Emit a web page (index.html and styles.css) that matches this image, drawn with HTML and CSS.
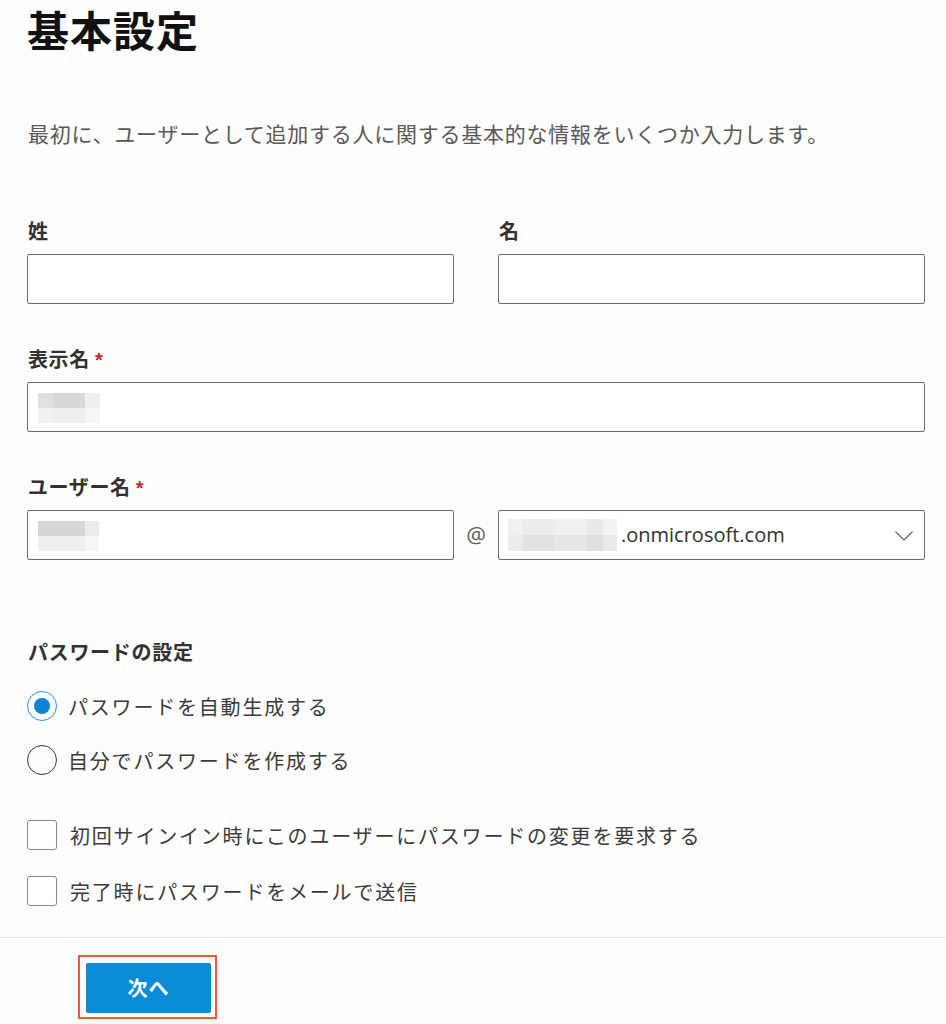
FILE: index.html
```html
<!DOCTYPE html>
<html lang="ja">
<head>
<meta charset="utf-8">
<title>基本設定</title>
<link rel="stylesheet" href="styles.css">
</head>
<body>
<div class="page">
  <h1 class="title">基本設定</h1>
  <p class="desc">最初に、ユーザーとして追加する人に関する基本的な情報をいくつか入力します。</p>

  <div class="row two first">
    <div class="field">
      <div class="label">姓</div>
      <div class="input"></div>
    </div>
    <div class="field">
      <div class="label">名</div>
      <div class="input"></div>
    </div>
  </div>

  <div class="row">
    <div class="field">
      <div class="label">表示名 <span class="req">*</span></div>
      <div class="input">
        <div class="blur blur-a">
          <i class="c1"></i><i class="c2"></i><i class="c3"></i>
          <i class="c4"></i><i class="c5"></i><i class="c6"></i>
        </div>
      </div>
    </div>
  </div>

  <div class="row">
    <div class="label">ユーザー名 <span class="req">*</span></div>
    <div class="user-row">
      <div class="input">
        <div class="blur blur-b">
          <i class="d1"></i><i class="d2"></i>
          <i class="d3"></i><i class="d4"></i>
        </div>
      </div>
      <div class="at">@</div>
      <div class="input select">
        <div class="domain">
          <div class="blur blur-c">
            <i class="e1"></i><i class="e2"></i><i class="e3"></i><i class="e4"></i><i class="e5"></i>
            <i class="e6"></i><i class="e7"></i><i class="e8"></i><i class="e9"></i><i class="e10"></i>
          </div>
          <span class="domain-text">.onmicrosoft.com</span>
        </div>
        <svg class="chev" width="18" height="10" viewBox="0 0 18 10"><path d="M0.5 0.8 L9 9 L17.5 0.8" fill="none" stroke="#605e5c" stroke-width="1.2"/></svg>
      </div>
    </div>
  </div>

  <div class="pw-title">パスワードの設定</div>
  <div class="radios">
    <div class="opt"><span class="radio on"><span class="dot"></span></span><span>パスワードを自動生成する</span></div>
    <div class="opt"><span class="radio"></span><span>自分でパスワードを作成する</span></div>
  </div>

  <div class="checks">
    <div class="opt chk"><span class="box"></span><span>初回サインイン時にこのユーザーにパスワードの変更を要求する</span></div>
    <div class="opt chk"><span class="box"></span><span>完了時にパスワードをメールで送信</span></div>
  </div>
</div>
<div class="footer">
  <span class="focus-ring"><button class="btn">次へ</button></span>
</div>
</body>
</html>
```

FILE: styles.css
```css
html, body {
  margin: 0;
  padding: 0;
  background: #fcfdfc;
}
body {
  font-family: "Noto Sans CJK JP", "Noto Sans", sans-serif;
  color: #323130;
}
.page {
  padding: 0 21px 0 27px;
}
.title {
  margin: 0;
  height: 60px;
  font-size: 42px;
  line-height: 58px;
  font-weight: 700;
  color: #111;
  letter-spacing: 1px;
}
.desc {
  margin: 58px 0 0 1px;
  height: 30px;
  font-size: 21px;
  line-height: 30px;
  letter-spacing: 0.75px;
  color: #5a5856;
}
.row {
  margin-top: 40px;
}
.row.first {
  margin-top: 68px;
}
.row.two {
  display: grid;
  grid-template-columns: 1fr 1fr;
  column-gap: 44px;
}
.label {
  height: 30px;
  font-size: 20px;
  line-height: 30px;
  font-weight: 700;
  letter-spacing: 0.6px;
  margin: 0 0 8px 1px;
  color: #323130;
  overflow: hidden;
}
.req {
  color: #c4262e;
  font-family: "Liberation Sans", sans-serif;
  font-size: 20px;
  line-height: 1;
}
.input {
  box-sizing: border-box;
  height: 50px;
  border: 1px solid #6e6c6a;
  border-radius: 2px;
  background: #fff;
  display: flex;
  align-items: center;
  padding: 0 11px 0 10px;
}
.user-row {
  display: grid;
  grid-template-columns: 1fr 44px 1fr;
}
.at {
  font-family: "Open Sans", sans-serif;
  font-size: 22px;
  color: #605e5c;
  display: flex;
  align-items: center;
  justify-content: center;
  padding-bottom: 2px;
}
.select {
  justify-content: space-between;
  padding-left: 9px;
}
.domain {
  display: flex;
  align-items: center;
}
.domain-text {
  font-family: "Open Sans", sans-serif;
  font-size: 20px;
  color: #323130;
  margin-left: 4px;
  padding-bottom: 2px;
}
.chev {
  display: block;
  margin-top: 1px;
}
.blur {
  display: grid;
}
.blur i {
  display: block;
}
.blur-a {
  grid-template-columns: 15px 32px 15px;
  grid-template-rows: 15px 15px;
  margin-top: 2px;
}
.c1 { background: #e1e0e0; }
.c2 { background: #d9d8d8; }
.c3 { background: #efefef; }
.c4 { background: #f1f1f1; }
.c5 { background: #eeeeee; }
.c6 { background: #f6f6f6; }
.blur-b {
  grid-template-columns: 47px 14px;
  grid-template-rows: 15px 15px;
  margin-top: 2px;
}
.d1 { background: #d6d6d6; }
.d2 { background: #ececec; }
.d3 { background: #efefef; }
.d4 { background: #f7f7f7; }
.blur-c {
  grid-template-columns: 15px 32px 32px 16px 14px;
  grid-template-rows: 16px 16px;
}
.e1 { background: #f1f1f1; }
.e2 { background: #ececec; }
.e3 { background: #f0f0f0; }
.e4 { background: #e8e8e8; }
.e5 { background: #f3f3f3; }
.e6 { background: #ebebeb; }
.e7 { background: #e1e1e1; }
.e8 { background: #e6e6e6; }
.e9 { background: #dedede; }
.e10 { background: #e9e9e9; }

.pw-title {
  margin: 77px 0 0 1px;
  height: 30px;
  font-size: 20px;
  line-height: 30px;
  font-weight: 700;
  letter-spacing: 0.7px;
}
.radios {
  margin-top: 24px;
  display: flex;
  flex-direction: column;
  gap: 24px;
}
.opt {
  display: flex;
  align-items: center;
  height: 30px;
  font-size: 20px;
  letter-spacing: 1.8px;
  color: #3b3a39;
}
.radio {
  box-sizing: border-box;
  width: 30px;
  height: 30px;
  border-radius: 50%;
  border: 1.5px solid #323130;
  margin-right: 11px;
  display: flex;
  align-items: center;
  justify-content: center;
  flex: none;
}
.radio.on {
  border: 1.5px solid #2b8fde;
}
.dot {
  width: 16px;
  height: 16px;
  border-radius: 50%;
  background: #0b84d6;
}
.checks {
  margin-top: 45px;
  display: flex;
  flex-direction: column;
  gap: 26px;
}
.box {
  box-sizing: border-box;
  width: 30px;
  height: 30px;
  border: 1px solid #8a8886;
  border-radius: 3px;
  background: #fff;
  margin-right: 13px;
  flex: none;
}
.footer {
  margin-top: 31px;
  border-top: 1px solid #e6e4ea;
  padding: 17px 0 0 78px;
  height: 90px;
  box-sizing: border-box;
}
.focus-ring {
  display: inline-block;
  border: 2px solid #f25a2c;
  padding: 6px 4px 4px 6px;
  line-height: 0;
}
.btn {
  box-sizing: border-box;
  width: 125px;
  height: 50px;
  border: none;
  border-radius: 2px;
  background: #0a8bd6;
  color: #fff;
  font-family: "Noto Sans CJK JP", sans-serif;
  font-size: 20px;
  line-height: 50px;
  font-weight: 700;
  letter-spacing: 1px;
  padding: 0;
}
```
